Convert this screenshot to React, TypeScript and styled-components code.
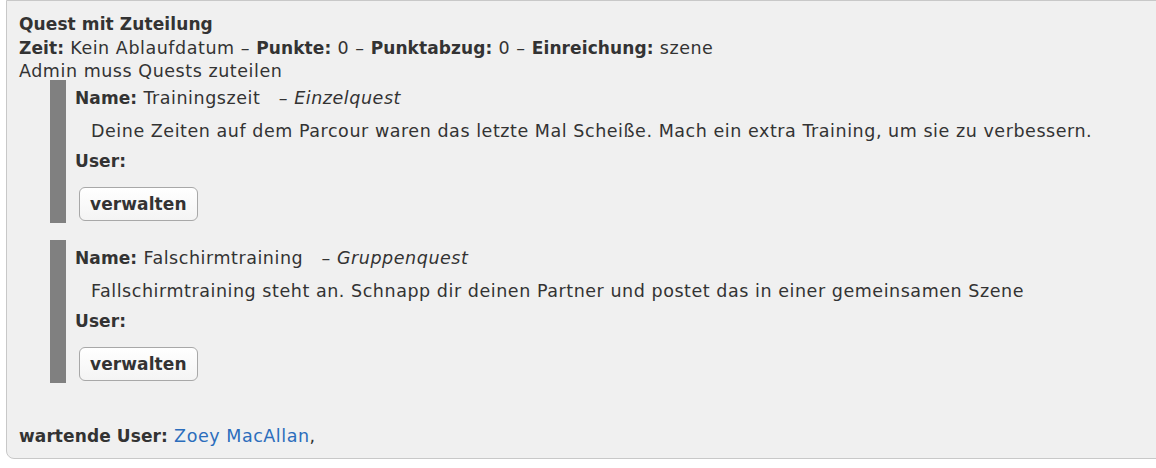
import React from "react";
import styled, { createGlobalStyle } from "styled-components";

const Global = createGlobalStyle`
  html, body { margin: 0; padding: 0; background: #ffffff; }
  body { font-family: "DejaVu Sans", "Liberation Sans", sans-serif; color: #333333; }
`;

const Panel = styled.div`
  box-sizing: border-box;
  margin-left: 6px;
  width: 1160px;
  height: 459px;
  background: #f0f0f0;
  border: 1px solid #c8c8c8;
  border-radius: 0 0 0 8px;
  padding: 12px 0 0 12px;
  font-size: 17.5px;
  letter-spacing: 0.55px;
  line-height: 23px;
`;

const B = styled.span`
  font-weight: bold;
  font-size: 17px;
  letter-spacing: 0.1px;
`;

const Title = styled(B)`
  display: block;
  margin-bottom: 1px;
`;

const Line = styled.div``;

const QuestList = styled.div`
  margin: -3px 0 0 31px;
  display: flex;
  flex-direction: column;
  gap: 17px;
`;

const Quest = styled.div`
  border-left: 16px solid #808080;
  padding: 7px 0 2px 9px;
`;

const NameRow = styled.div``;

const Kind = styled.em`
  font-style: italic;
`;

const Desc = styled.div`
  padding-left: 16px;
  margin-top: 10px;
`;

const UserRow = styled(B)`
  display: block;
  margin-top: 7px;
`;

const Button = styled.button`
  display: block;
  margin: 14px 0 0 4px;
  height: 34px;
  padding: 0 10px;
  font-family: inherit;
  font-size: 17px;
  letter-spacing: 0.1px;
  font-weight: bold;
  color: #333333;
  background: linear-gradient(#ffffff, #f4f4f4);
  border: 1px solid #a8a8a8;
  border-radius: 6px;
`;

const Waiting = styled.div`
  margin-top: 42px;
`;

const Link = styled.a`
  color: #2b6dbc;
  text-decoration: none;
`;

const quests = [
  {
    name: "Trainingszeit",
    kind: "Einzelquest",
    desc: "Deine Zeiten auf dem Parcour waren das letzte Mal Scheiße. Mach ein extra Training, um sie zu verbessern.",
  },
  {
    name: "Falschirmtraining",
    kind: "Gruppenquest",
    desc: "Fallschirmtraining steht an. Schnapp dir deinen Partner und postet das in einer gemeinsamen Szene",
  },
];

export default function App() {
  return (
    <>
      <Global />
      <Panel>
        <Title>Quest mit Zuteilung</Title>
        <Line>
          <B>Zeit:</B> Kein Ablaufdatum – <B>Punkte:</B> 0 – <B>Punktabzug:</B> 0 – <B>Einreichung:</B> szene
        </Line>
        <Line>Admin muss Quests zuteilen</Line>
        <QuestList>
          {quests.map((q) => (
            <Quest key={q.name}>
              <NameRow>
                <B>Name:</B> {q.name}&nbsp;&nbsp; – <Kind>{q.kind}</Kind>
              </NameRow>
              <Desc>{q.desc}</Desc>
              <UserRow>User:</UserRow>
              <Button>verwalten</Button>
            </Quest>
          ))}
        </QuestList>
        <Waiting>
          <B>wartende User:</B> <Link href="#">Zoey MacAllan</Link>,
        </Waiting>
      </Panel>
    </>
  );
}
